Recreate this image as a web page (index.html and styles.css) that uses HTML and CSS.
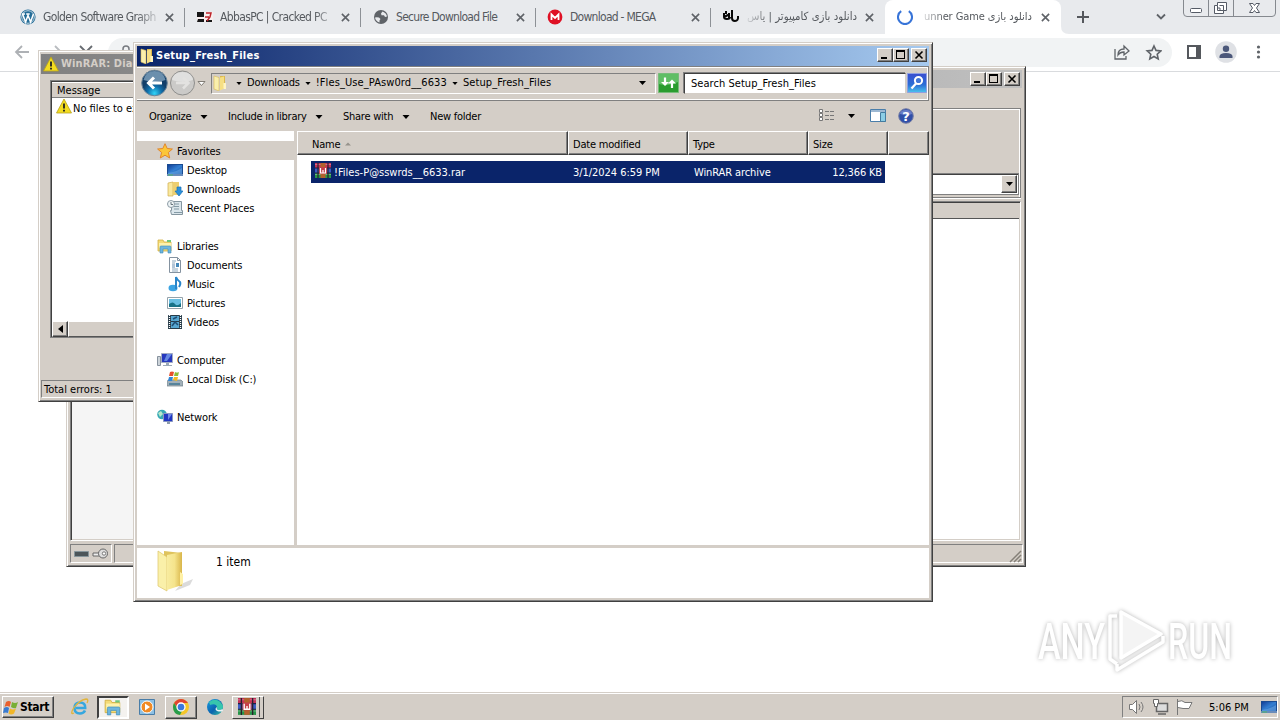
FILE: index.html
```html
<!DOCTYPE html>
<html lang="en">
<head>
<meta charset="utf-8">
<title>Desktop</title>
<link rel="stylesheet" href="styles.css">
</head>
<body>
<svg class="defs" width="0" height="0">
  <defs>
    <linearGradient id="gold"><stop offset="0" stop-color="#f8eca0"/><stop offset=".5" stop-color="#f5e48c"/><stop offset="1" stop-color="#d9b64a"/></linearGradient>
    <linearGradient id="blue" x2="1" y2="1"><stop offset="0" stop-color="#123f98"/><stop offset=".5" stop-color="#337fd2"/><stop offset="1" stop-color="#164d9e"/></linearGradient>
    <radialGradient id="orb" cy=".9"><stop offset="0" stop-color="#32d4f7"/><stop offset=".55" stop-color="#106fab"/><stop offset="1" stop-color="#123e69"/></radialGradient>
    <linearGradient id="edge" x2="1" y2="1"><stop offset="0" stop-color="#1b9de2"/><stop offset=".55" stop-color="#0b63af"/><stop offset="1" stop-color="#38c8a0"/></linearGradient>
    <linearGradient id="lens" y2="1" x2="0"><stop offset="0" stop-color="#3b4fd0"/><stop offset=".6" stop-color="#2a6fd6"/><stop offset="1" stop-color="#4cc4ee"/></linearGradient>
  </defs>
  <symbol id="x" viewBox="0 0 10 10"><path d="M1 1l8 8M9 1L1 9" stroke="#5f6368" stroke-width="1.8"/></symbol>
  <symbol id="folder" viewBox="0 0 16 16"><path d="M8 1h5v13H8z" fill="#dcb84e"/><path d="M2 1l5 1.500v13.500l-5-2z" fill="#f9efad" stroke="#d8b954" stroke-width=".6"/><path d="M8 2.500l4-1v12l-4 2z" fill="#f6df83"/><path d="M11.500 8H14v6h-2.500z" fill="#fff4c2"/></symbol>
  <symbol id="warn" viewBox="0 0 16 16"><path d="M8 1L15.5 15H.5z" fill="#f3dc20" stroke="#b6a21c" stroke-width=".8" stroke-linejoin="round"/><path d="M8 5.5v5M8 11.7v1.8" stroke="#222" stroke-width="1.8"/></symbol>
  <symbol id="screen" viewBox="0 0 16 14"><path d="M0 1h16v12H0z" fill="#1a4b91"/><path d="M1 2h14v9H1z" fill="url(#blue)"/><path d="M1 10Q9 9 15 5v6H1z" fill="#69a6e5" opacity=".6"/><path d="M0 12h16" stroke="#b9cde4"/><path d="M1 12h5" stroke="#4db66a"/></symbol>
  <symbol id="library" viewBox="0 0 16 16"><path d="M1 3V2h5l1 2h7v9H1z" fill="#f4db77" stroke="#d2b044" stroke-width=".8"/><path d="M2 5h12v5H2z" fill="#fdf2ac"/><path d="M10 2h4v2h-4z" fill="#6fc77a"/><path d="M3 15V9q0-1 1-1h9q1 0 1 1v6h-3v-4H6v4z" fill="#6db5dd" stroke="#3d8cba" stroke-width=".6"/></symbol>
  <symbol id="rar" viewBox="0 0 16 16"><path d="M0 0h16v5H0z" fill="#c4325a"/><path d="M0 5h16v5H0z" fill="#3c5cc4"/><path d="M0 10h16v5H0z" fill="#269548"/><path d="M0 1.5h16M0 11.5h16" stroke="#fff" opacity=".3"/><path d="M3 0v15M13 0v15" stroke="#28202c" stroke-width="1.2"/><path d="M5.5 0h5v15h-5z" fill="#b2622c"/><path d="M4 4h8v7H4z" fill="#c5404a"/><path d="M5.5 5v5h5V5M8 7v3" stroke="#fff" fill="none" stroke-width="1.2"/><path d="M0 5h4M12 5h4M0 10h4M12 10h4" stroke="#202040"/></symbol>
  <symbol id="tri" viewBox="0 0 7 4"><path d="M0 0h7L3.5 4z"/></symbol>
  <symbol id="min" viewBox="0 0 12 10"><path d="M2 8h6" stroke="#000" stroke-width="2"/></symbol>
  <symbol id="max" viewBox="0 0 12 10"><path d="M1.500 1.500h8v7h-8z" fill="none" stroke="#000" shape-rendering="crispEdges"/><path d="M1 1h9" stroke="#000" stroke-width="2"/></symbol>
  <symbol id="close" viewBox="0 0 12 10"><path d="M2.500 1.500l7 7M9.500 1.500l-7 7" stroke="#000" stroke-width="1.600"/></symbol>
</svg>

<div class="desktop">
  <section class="browser">
    <div class="tabs">
      <div class="tab t1">
        <svg class="fav" viewBox="0 0 16 16"><circle cx="8" cy="8" r="7.6" fill="#246d98"/><circle cx="8" cy="8" r="6.3" fill="none" stroke="#e7eef3" stroke-width=".8"/><path d="M2.5 5l3.1 8L8 6.3l2.6 6.7 2.8-8M2 5h3M6.2 5h3.5" fill="none" stroke="#fff" stroke-width="1.5"/></svg>
        <span class="label fade">Golden Software Graph</span><svg class="x"><use href="#x"/></svg>
      </div>
      <div class="tab t2">
        <svg class="fav" viewBox="0 0 16 16"><path d="M0 3h16v10H0z" fill="#f8eeee"/><path d="M0 3h7v5H0zM1 10h6v3H0zM9 11h6v2H9z" fill="#171717"/><path d="M9 4h5l-1 4-3 4M8 8h4" stroke="#bd262d" stroke-width="1.500" fill="none"/></svg>
        <span class="label fade">AbbasPC | Cracked PC</span><svg class="x"><use href="#x"/></svg>
      </div>
      <div class="tab t3">
        <svg class="fav" viewBox="0 0 16 16"><circle cx="8" cy="8" r="7" fill="#5f6368"/><path d="M2 8.500q1.500-.5 4 0l1.500 1.500-1 1.500v2Q2.500 12 2 8.500M9.500 2.500L8 4.500l.5 1.800H11l1 1.700 2-.5Q13.500 4 9.500 2.500" fill="#e8eaed"/></svg>
        <span class="label">Secure Download File</span><svg class="x"><use href="#x"/></svg>
      </div>
      <div class="tab t4">
        <svg class="fav" viewBox="0 0 16 16"><circle cx="8" cy="8" r="7.4" fill="#df1024"/><path d="M4.500 11V5.500L8 9l3.500-3.500V11" stroke="#fff" stroke-width="1.800" fill="none"/></svg>
        <span class="label">Download - MEGA</span><svg class="x"><use href="#x"/></svg>
      </div>
      <div class="tab t5">
        <svg class="fav" viewBox="0 0 16 16"><path d="M1 4v4q0 2 3 2t3-2M9 1v8q0 3 3 3 3.500 0 3-5M3 2v3M6 4v6M1 8l6-3" fill="none" stroke="#080808" stroke-width="2"/></svg>
        <span class="label fa fadeleft" dir="rtl">دانلود بازی کامپیوتر | یاس</span><svg class="x"><use href="#x"/></svg>
      </div>
      <div class="tab t6 active">
        <svg class="fav" viewBox="0 0 16 16"><path d="M4.200 2.200a7 7 0 1 0 7.600 0" fill="none" stroke="#3774d8" stroke-width="2.100"/></svg>
        <span class="label fa fadeleft" dir="rtl">دانلود بازی unner Game</span><svg class="x"><use href="#x"/></svg>
      </div>
      <svg class="strip-end" width="219" height="34" viewBox="1061 0 219 34"><path d="M1061 26q0 8 8 8h-8z" fill="#fff"/><path d="M1077 17h12M1083 11v12" stroke="#55585d" stroke-width="2"/><path d="M1157 14.500l4 4 4-4" fill="none" stroke="#5f6368" stroke-width="1.800"/><path d="M1183.500 0v13q0 3.500 3.500 3.500h85q3.500 0 3.500-3.500V0M1208.500 0v16M1233.500 0v16" fill="none" stroke="#85898f"/><rect x="1190.500" y="8.500" width="11" height="4" rx="1" fill="#fff" stroke="#555b66"/><path d="M1217.500 2.500h9v8h-3v3h-9v-8h3z" fill="#fff" stroke="#555b66"/><path d="M1217.500 5.500v5h6M1219.500 5.500h4v5M1217.500 8h2.500v2.500" fill="none" stroke="#555b66"/><path d="M1249.500 3.500h3.500l1.500 2 1.500-2h3.500l-3 4.500 3 4.500h-3.500l-1.500-2-1.500 2h-3.500l3-4.500z" fill="#fff" stroke="#555b66"/></svg>
    </div>
    <div class="toolbar">
      <svg class="nav-icons" width="108" height="37" viewBox="0 34 108 37"><path d="M29 52H16M22 46l-6 6 6 6" fill="none" stroke="#aeb1b5" stroke-width="1.800"/><path d="M48 52h13M55 46l6 6-6 6" fill="none" stroke="#b9bcc0" stroke-width="1.800"/><path d="M80 46l12 12M92 46L80 58" stroke="#686c71" stroke-width="1.800"/></svg>
      <div class="omnibox"><svg width="14" height="16" viewBox="0 0 14 16"><path d="M4 8V4q0-3 3-3t3 3v4M2 8h10v7H2z" fill="none" stroke="#777b80" stroke-width="1.500"/></svg>
        <svg class="omni-end" width="48" height="20" viewBox="0 0 48 20"><path d="M1 6v10h11v-3M4 12q0-6 6-6V3l5 5-5 4v-3q-4 0-6 3z" fill="none" stroke="#5f6368" stroke-width="1.300"/><path d="M40 3l2 4.400 4.800.5-3.600 3.300 1 4.700-4.200-2.400-4.200 2.400 1-4.700-3.600-3.300 4.800-.5z" fill="none" stroke="#5f6368" stroke-width="1.600"/></svg>
      </div>
      <svg class="tool-end" width="108" height="37" viewBox="1172 34 108 37"><path d="M1188 46h12v12h-12z" fill="none" stroke="#55585d" stroke-width="2"/><path d="M1196 46h4.500v12h-4.500z" fill="#55585d"/><circle cx="1226" cy="52" r="10.800" fill="#dfe1e5"/><circle cx="1226" cy="48.800" r="3.200" fill="#4c587a"/><path d="M1219.500 58v-1.500q0-3.500 6.500-3.500t6.500 3.500V58z" fill="#4c587a"/><g fill="#5f6368"><circle cx="1258.500" cy="47" r="1.600"/><circle cx="1258.500" cy="52" r="1.600"/><circle cx="1258.500" cy="57" r="1.600"/></g></svg>
    </div>
    <svg class="watermark" width="210" height="76" viewBox="0 0 210 76">
      <g class="mark" fill="#fff"><text x="5" y="53" textLength="67" lengthAdjust="spacingAndGlyphs">ANY</text><text x="135" y="53" textLength="64" lengthAdjust="spacingAndGlyphs">RUN</text><g stroke="#fff" stroke-width="3.500" stroke-linejoin="round" fill="none"><path d="M88 6v46l40-24z" fill="#f4f4f4"/><path d="M84 10h-7v43l7 5"/><path d="M84 58v6l46-28v-6"/></g></g>
    </svg>
  </section>

  <section class="win archive">
    <header><span class="buttons"><b><svg><use href="#min"/></svg></b><b><svg><use href="#max"/></svg></b><b class="gap"><svg><use href="#close"/></svg></b></span></header>
    <div class="group"><div class="combo"><b><svg class="tri"><use href="#tri"/></svg></b></div></div>
    <div class="filelist"><div class="side"></div><div class="rows"><div class="colhead"></div></div></div>
    <footer><div class="keys"><svg width="36" height="14" viewBox="0 0 36 14"><path d="M1.500 4.500h14v5h-14z" fill="#4c5559" stroke="#86959b"/><path d="M20 6h7v3h-7z" fill="#eee" stroke="#666"/><circle cx="30" cy="6.500" r="4.500" fill="#ddd" stroke="#666"/><circle cx="31" cy="6.500" r="1.700" fill="#fff" stroke="#777"/></svg></div><div class="status"></div><svg class="grip" width="14" height="14"><path d="M2 13L13 2M6 13l7-7M10 13l3-3" stroke="#858078" stroke-width="1.500"/></svg></footer>
  </section>

  <section class="win diag">
    <header><svg class="i16"><use href="#warn"/></svg><span class="wt">WinRAR: Diag</span></header>
    <div class="messages">
      <div class="mh"><span>Message</span></div>
      <div class="mrow"><svg class="i16"><use href="#warn"/></svg><span>No files to extract</span></div>
      <div class="scroll"><b><svg width="5" height="8"><path d="M5 0v8L0 4z"/></svg></b><i></i></div>
    </div>
    <div class="errors"><span>Total errors: 1</span></div>
  </section>

  <section class="win explorer">
    <header><svg class="i16"><use href="#folder"/></svg><span class="wt">Setup_Fresh_Files</span><span class="buttons"><b><svg><use href="#min"/></svg></b><b><svg><use href="#max"/></svg></b><b class="gap"><svg><use href="#close"/></svg></b></span></header>
    <div class="navbar">
      <svg class="orbs" width="66" height="28" viewBox="0 0 66 28"><circle cx="13.500" cy="14" r="12.800" fill="url(#orb)" stroke="#6d8598"/><path d="M2.500 11q2-9 11-9t11 9q-10 4-22 0" fill="#b5d1e5" opacity=".55"/><path d="M21 14H8M13 8.500L7.500 14l5.500 5.500" fill="none" stroke="#fff" stroke-width="3"/><circle cx="41.500" cy="14" r="12" fill="#cbcac8" stroke="#8e8e8c"/><path d="M31 11q1-8 10.500-8T52 11q-10 4-21 0" fill="#eee" opacity=".6"/><path d="M35 14h12M42 8.500l5.500 5.500-5.500 5.500" fill="none" stroke="#e3e2e0" stroke-width="2.500"/><path d="M57 12.500h7l-3.500 4z" fill="#fff" stroke="#817d76"/></svg>
      <div class="address"><svg class="i16 af"><use href="#folder"/></svg><svg class="tri a1"><use href="#tri"/></svg><span class="c1">Downloads</span><svg class="tri"><use href="#tri"/></svg><span class="c2">!Fles_Use_PAsw0rd__6633</span><svg class="tri"><use href="#tri"/></svg><span class="c3">Setup_Fresh_Files</span><svg class="tri last"><use href="#tri"/></svg></div>
      <svg class="go" width="21" height="20" viewBox="0 0 21 20"><path d="M.5.5h20v19H.5z" fill="#2a9c2f" stroke="#76bc79"/><path d="M1 1h19v8Q10 14 1 11z" fill="#73ca78" opacity=".75"/><path d="M7 4.500v5M14 15v-5" stroke="#fff" stroke-width="2.200"/><path d="M3 9h8l-4 4zM10 10.500h8l-4-4z" fill="#fff"/></svg>
      <div class="search"><span>Search Setup_Fresh_Files</span></div>
      <svg class="find" width="20" height="20" viewBox="0 0 20 20"><path d="M.5.500h19v19H.5z" fill="url(#lens)" stroke="#8f9fe0"/><circle cx="11.500" cy="7.500" r="3.600" fill="#4276d6" stroke="#fff" stroke-width="2"/><path d="M9 10.500l-4.500 5" stroke="#fff" stroke-width="2.300"/></svg>
    </div>
    <div class="commands"><span class="k1">Organize</span><svg class="tri"><use href="#tri"/></svg><span class="k2">Include in library</span><svg class="tri"><use href="#tri"/></svg><span class="k3">Share with</span><svg class="tri"><use href="#tri"/></svg><span class="k4">New folder</span>
      <svg class="views" width="96" height="18" viewBox="0 0 96 18"><path d="M.5 2.500h3v3h-3zM.5 6.500h3v3h-3zM.5 10.500h3v3h-3z" fill="#fff" stroke="#777"/><path d="M6 4.500h9M6 8.500h9M6 12.500h9" stroke="#777" stroke-dasharray="4 1"/><path d="M29 7h7l-3.500 4z"/><path d="M51.500 2.500h15v12h-15z" fill="#fff" stroke="#4a7eaa"/><path d="M52 3h14v2H52z" fill="#9db8d2"/><path d="M61.500 5.500h5v9h-5z" fill="#8bcde5" stroke="#437b9f"/><circle cx="87" cy="9" r="7.300" fill="#304fa8" stroke="#777fa6"/><path d="M81 7q0-4 6-4t6 4q-5 2-12 0" fill="#8292d4" opacity=".7"/><text x="87" y="13.500" class="help">?</text></svg>
    </div>
    <div class="body">
      <nav>
        <div class="ni root sel"><svg class="i16" viewBox="0 0 16 16"><path d="M8 .7l2.200 4.800 5.200.5-4 3.500 1.300 5.500L8 12.200 3.300 15l1.300-5.500-4-3.500 5.200-.5z" fill="#fbc638" stroke="#e2862b"/></svg><span>Favorites</span></div>
        <div class="ni"><svg class="i16"><use href="#screen"/></svg><span>Desktop</span></div>
        <div class="ni"><svg class="i16" viewBox="0 0 16 16"><path d="M1 2l5-1v14H1z" fill="#f9e89d" stroke="#d0ad4d" stroke-width=".7"/><path d="M6 1h6v13H6z" fill="#edcf70"/><path d="M10 6h4v4h2l-4 5L8 10h2z" fill="#2d91db" stroke="#1970b6" stroke-width=".7"/></svg><span>Downloads</span></div>
        <div class="ni"><svg class="i16" viewBox="0 0 16 16"><path d="M4.500 1.500h10v9h1v4h-11l-1-4h1z" fill="#dbe6ec" stroke="#84959f"/><path d="M8 4h4M7 6.500h5M7 9h5M7 12.500h8" stroke="#849aa5"/><circle cx="4" cy="4" r="3.500" fill="#eef4f6" stroke="#8d9ba5"/><path d="M4 2v2.500h2" fill="none" stroke="#66747c"/></svg><span>Recent Places</span></div>
        <div class="ni root space"><svg class="i16"><use href="#library"/></svg><span>Libraries</span></div>
        <div class="ni"><svg class="i16" viewBox="0 0 16 16"><path d="M2.500.5h8l3 3v12h-11z" fill="#fff" stroke="#8492a0"/><path d="M10.500.5v3h3" fill="none" stroke="#8492a0"/><path d="M5 4h4M5 6h3M5 12h6M5 14h6" stroke="#8da7bc"/><path d="M9 6h3v4H9z" fill="#4588ba"/><path d="M5 8h3M5 10h3" stroke="#668bb0"/></svg><span>Documents</span></div>
        <div class="ni"><svg class="i16" viewBox="0 0 16 16"><ellipse cx="6" cy="12" rx="4.500" ry="3.300" fill="#3ba4e3"/><path d="M9 13V1q1 3 4 5 1 2-1 5" fill="none" stroke="#2885ca" stroke-width="2"/></svg><span>Music</span></div>
        <div class="ni"><svg class="i16" viewBox="0 0 16 16"><path d="M.5 2.500h15v11H.5z" fill="#fff" stroke="#95a2aa"/><path d="M2 4h12v8H2z" fill="#69bee1"/><path d="M2 9q4-3 6 0t6-1v4H2z" fill="#187287"/></svg><span>Pictures</span></div>
        <div class="ni"><svg class="i16" viewBox="0 0 16 16"><path d="M1 1h14v14H1z" fill="#283c49"/><path d="M4 2h8v5H4zM4 8h8v6H4z" fill="#57a7d1"/><path d="M5 12l3-4 3 3M6 5l4-2" stroke="#204f75" stroke-width="1.500" fill="none"/><path d="M2.500 1v14M13.500 1v14" stroke="#fff" stroke-width="1.300" stroke-dasharray="1 1"/></svg><span>Videos</span></div>
        <div class="ni root space"><svg class="i16" viewBox="0 0 16 16"><path d="M.5 4.500h3v9h-3z" fill="#ccd3d9" stroke="#87929e"/><path d="M4.500 1.500h11v9h-11z" fill="#2537bd" stroke="#a2abc2"/><path d="M10 2h5l-5 7H7z" fill="#6588e2"/><path d="M9 11h3v2h3v1H6v-1h3z" fill="#9ba9b7"/></svg><span>Computer</span></div>
        <div class="ni"><svg class="i16" viewBox="0 0 16 16"><path d="M1 9h13l2 2v4H0v-4z" fill="#a2b0b9" stroke="#6f7f86" stroke-width=".7"/><path d="M2 12h11v2H2z" fill="#57849b"/><path d="M3 1q2-1 4 0L6 5H2z" fill="#e8502c"/><path d="M8 1q2 1 4 0l-1 4H7z" fill="#8dbd36"/><path d="M2 6h4l-1 4H1z" fill="#3286d7"/><path d="M7 6h4l-1 4-4-1z" fill="#f4bb25"/></svg><span>Local Disk (C:)</span></div>
        <div class="ni root space"><svg class="i16" viewBox="0 0 16 16"><circle cx="5" cy="5.500" r="4.800" fill="#36a9b5"/><path d="M1 4l3-2 2 3-3 3z" fill="#b4e7cb"/><path d="M6.500 4.500h9v8h-9z" fill="#2036c3" stroke="#8996c0"/><path d="M11 5h4l-4 6z" fill="#708be6"/><path d="M10 13h3v2h-3z" fill="#8e9daa"/></svg><span>Network</span></div>
      </nav>
      <main>
        <div class="columns"><div class="col name"><span>Name</span><svg width="7" height="4"><path d="M0 3.500h6L3 .5z" fill="#96928b"/></svg></div><div class="col date"><span>Date modified</span></div><div class="col type"><span>Type</span></div><div class="col size"><span>Size</span></div><div class="col rest"></div></div>
        <div class="file"><svg class="i16"><use href="#rar"/></svg><span class="f1">!Files-P@sswrds__6633.rar</span><span class="f2">3/1/2024 6:59 PM</span><span class="f3">WinRAR archive</span><span class="f4">12,366 KB</span></div>
      </main>
    </div>
    <div class="details"><svg width="42" height="46" viewBox="0 0 42 46"><path d="M27 36l12-5-3 6-15 6z" fill="#999" opacity=".35"/><path d="M10 3l18 2v33H10z" fill="#dfc35d"/><path d="M4 3l9 6v34L4 38z" fill="#faf0a9" stroke="#ddc467" stroke-width=".7"/><path d="M13 7l15-3v33l-15 5z" fill="url(#gold)"/><path d="M26 24l3 2v10l-3 1z" fill="#fff1a7"/></svg><span>1 item</span></div>
  </section>

  <footer class="taskbar">
    <div class="start"><svg width="17" height="17" viewBox="0 0 17 17"><path d="M3 3q3-2 5 0L6.500 8q-2-2-5 0z" fill="#e9602e"/><path d="M9 3q3 2 6 0l-2 6q-2 1-5-1z" fill="#78af36"/><path d="M1 9q3-2 5 0L5 14q-2-1-5 0z" fill="#397bd1"/><path d="M7 9.500q3 2 6 0l-2 5q-3 2-5.500 0z" fill="#f1b629"/></svg><span>Start</span></div>
    <div class="task p1"><svg class="i18" viewBox="0 0 18 18"><path d="M14 12.500q-1.500 3-5 3-5.500 0-5.500-5.500T9 4.500q5.500 0 5.200 5.500H5" fill="none" stroke="#35a7df" stroke-width="2.600"/><path d="M3 15q-4 2-1-4Q8 2 15 1q3 0 1 4" fill="none" stroke="#e1b53d" stroke-width="1.300"/></svg></div>
    <div class="task p2 pressed"><svg class="i18"><use href="#library"/></svg></div>
    <div class="task p3"><svg class="i18" viewBox="0 0 18 18"><path d="M1.500 1.500h15v15h-15z" fill="#8cc0e4" stroke="#497da8"/><circle cx="9" cy="9" r="6" fill="#f08a25" stroke="#fff"/><path d="M7 5.500l5 3.500-5 3.500z" fill="#fff"/></svg></div>
    <div class="task p4 raised"><svg class="i18" viewBox="0 0 18 18"><circle cx="9" cy="9" r="8" fill="#f4c629"/><path d="M2 5Q5 1 9 1t7 4H9q-3 0-4 4z" fill="#e04432"/><path d="M2 5l4 6q1 2 4 2l-2 4Q1 16 1 9q0-2 1-4" fill="#279c4a"/><circle cx="9" cy="9" r="4" fill="#3978df" stroke="#fff" stroke-width="1.300"/></svg></div>
    <div class="task p5"><svg class="i18" viewBox="0 0 18 18"><circle cx="9" cy="9" r="8" fill="url(#edge)"/><path d="M3 4q9-6 14 4 0 4-4 4-3 0-2-3-1-4-7-2z" fill="#37c6ad"/><path d="M11 9q-1 3 2 3 2 0 3.500-1l.5 2q-3 1-6 0-3-2 0-4" fill="#e9f4f5"/></svg></div>
    <div class="task p6 raised"><svg class="i18"><use href="#rar"/></svg></div>
    <div class="tray"><svg width="70" height="18" viewBox="0 0 70 18"><path d="M1.500 6.500h3l4-4v13l-4-4h-3z" fill="#fff" stroke="#777"/><path d="M11 6q2 3 0 6M13 4q4 5 0 10" fill="none" stroke="#777"/><path d="M28.500 5.500h11v8h-11zM30 16h8" fill="#ddd" stroke="#666" stroke-width="1.500"/><path d="M25.500 1.500h5v4h-1v3h-3v-3h-1z" fill="#fff" stroke="#666"/><path d="M49.500 1v16M50 3.500q4-2 7 1h7l-3 6h-6l-5-1" fill="#fff" stroke="#777"/></svg><span>5:06 PM</span><svg class="i16"><use href="#screen"/></svg></div>
  </footer>
</div>
</body>
</html>
```

FILE: styles.css
```css
*{box-sizing:border-box}
body{margin:0;background:#fff;color:#000;font:11px/14px "DejaVu Sans Condensed","DejaVu Sans",sans-serif;font-stretch:condensed;overflow:hidden}
svg{display:block;flex:none}
span{white-space:nowrap;flex:none}
.defs{position:absolute}
.desktop{width:1280px;height:720px;position:relative;overflow:hidden;background:#fff}
.i16{width:16px;height:16px}
.i18{width:18px;height:18px}
.tri{width:7px;height:4px}

/* browser */
.browser{height:693px}
.tabs{height:34px;background:#e8eaed;display:flex}
.tab{height:34px;display:flex;align-items:center;padding-left:12px;position:relative;color:#55595e;font:12px/16px "DejaVu Sans Condensed","DejaVu Sans",sans-serif;font-stretch:condensed}
.tab::after{content:"";position:absolute;right:0;top:8px;width:1px;height:19px;background:#8d9196}
.t1{width:185px;padding-left:20px}
.t2{width:176px}
.t3{width:175px}
.t4{width:175px;padding-left:11px}
.t5{width:174px}
.t6{width:176px}
.tab.t5::after,.tab.t6::after{display:none}
.active{background:#fff;border-radius:8px 8px 0 0}
.fav{width:16px;height:16px}
.label{margin-left:7px;width:114px;letter-spacing:-.72px}
.t1 .label,.t2 .label{letter-spacing:-.62px}
.t5 .label,.t6 .label{width:111px}
.fade{-webkit-mask-image:linear-gradient(90deg,#000 82%,rgba(0,0,0,.2))}
.fadeleft{-webkit-mask-image:linear-gradient(270deg,#000 78%,rgba(0,0,0,.1))}
.tab .fa{letter-spacing:0;font-size:11.3px}
.t6 .fa{letter-spacing:-.1px;font-size:11px;width:112px}
.x{width:9px;height:9px;margin-left:auto;margin-right:11px}
.toolbar{height:38px;background:#fff;border-bottom:1px solid #d9dbde;display:flex;align-items:flex-start}
.omnibox{margin-top:4px;width:1064px;height:29px;border-radius:15px;background:#f1f3f4;display:flex;align-items:center;padding:0 10px 0 11px}
.omni-end{margin-left:auto}
.watermark{margin:534px 0 0 1033px}
.mark{filter:drop-shadow(0 0 2px #b4b4b4)}
.watermark text{font:500 50px Roboto,sans-serif}

/* classic windows */
.win{position:absolute;background:#d4cec7;border:1px solid #d4cec7;border-right-color:#404040;border-bottom-color:#404040;box-shadow:inset 1px 1px #fff,inset -1px -1px #808080;overflow:hidden}
.win header{height:20px;display:flex;align-items:center;color:#fff;padding-left:2px;flex:none}
.wt{font-weight:bold;margin-left:1px}
.diag .wt{margin-left:2px;letter-spacing:.15px}
.explorer .wt{letter-spacing:.25px}
.buttons{margin-left:auto;display:flex;margin-right:2px}
.buttons b,.combo b,.scroll b{width:16px;height:14px;background:#d4cec7;border:1px solid #fff;border-right-color:#404040;border-bottom-color:#404040;box-shadow:inset -1px -1px #808080;display:flex;align-items:center;justify-content:center}
.explorer .buttons{margin-top:-2px}
.archive .buttons{margin-top:-1px}
.buttons svg{width:12px;height:10px}
.buttons .gap{margin-left:2px}

.archive{left:66px;top:66px;width:960px;height:501px;padding:3px;display:flex;flex-direction:column}
.archive header{height:18px;background:linear-gradient(90deg,#808080,#c0c0c0)}
.group{margin:20px 1px 0 0;height:90px;border:1px solid #808080;border-left:0;box-shadow:inset -1px 1px #fff,0 1px #fff;padding:64px 1px 0}
.combo{height:22px;background:#fff;border:1px solid #808080;box-shadow:inset 1px 1px #404040;padding:1px;display:flex;justify-content:flex-end}
.combo b{height:18px}
.filelist{height:341px;margin:3px 1px 0 0;border:1px solid #808080;border-right-color:#fff;border-bottom-color:#fff;display:flex;box-shadow:inset 1px 1px #404040}
.side{width:180px;margin:1px;background:#f5f5f5}
.rows{flex:1;background:#fff;margin:1px 1px 1px 0}
.colhead{height:16px;background:#d4cec7;border-bottom:1px solid #555}
.archive footer{margin-top:3px;height:19px;display:flex}
.keys{width:42px;border:1px solid #808080;border-right-color:#fff;border-bottom-color:#fff;padding:2px}
.status{flex:1;margin-left:2px;border:1px solid #808080;border-right-color:#fff;border-bottom-color:#fff}
.grip{margin:5px 0 0 -15px}

.diag{left:38px;top:50px;width:500px;height:352px;padding:3px 2px 2px}
.diag header{background:linear-gradient(90deg,#808080,#aaa);color:#d4cec7}
.messages{margin:6px 9px 0;height:258px;background:#fff;border:1px solid #808080;box-shadow:inset 1px 1px #404040;padding:2px 1px 0;display:flex;flex-direction:column}
.mh{height:15px;background:#d4cec7;border-bottom:1px solid #808080;padding:1px 0 0 5px}
.mrow{height:16px;display:flex;align-items:center;padding-left:4px}
.mrow span{padding:5px 0 0 1px}
.scroll{margin-top:auto;height:16px;display:flex}
.scroll b,.scroll i{height:16px}
.scroll i{width:250px;background:#d4cec7;border:1px solid #fff;border-bottom-color:#555}
.errors{margin-top:42px;height:18px;border:1px solid #808080;border-right-color:#fff;border-bottom-color:#fff;padding:2px}

.explorer{left:133px;top:42px;width:800px;height:560px;padding:3px;display:flex;flex-direction:column}
.explorer header{background:linear-gradient(90deg,#0a246a,#a6caf0)}
.navbar{height:35px;flex:none;border:1px solid #808080;border-left:0;box-shadow:inset -1px -1px #fff,inset 0 1px #fff;display:flex;align-items:center;padding:0 0 1px 4px}
.address{margin-left:4px;width:445px;height:21px;border:1px solid #808080;border-bottom-color:#fff;border-right-color:#fff;display:flex;align-items:center}
.address .tri,.commands .tri{width:6px;height:3px}
.address .tri.a1{margin-left:8px}
.address span{margin:0 5px}
.address .c1{letter-spacing:-.18px}
.address .c2{letter-spacing:.1px}
.address .c3{letter-spacing:.1px}
.address .last{margin-left:auto;margin-right:9px;width:7px;height:4px}
.go{margin-left:2px}
.search{margin-left:5px;width:222px;height:21px;background:#fff;border:1px solid #404040;border-right-color:#d4cec7;border-bottom-color:#d4cec7;box-shadow:-1px -1px #808080;padding:3px 6px;letter-spacing:.05px}
.find{margin-left:1px}
.commands{height:30px;display:flex;align-items:center;padding-left:12px;flex:none;letter-spacing:-.25px}
.commands span{padding-top:1px}
.k1{width:43px}
.k2{width:79px}
.k3{width:51px}
.commands .tri{width:8px;height:4px;margin:1px 20px 0 8px}
.views{margin-left:auto;margin-right:14px}
.help{font:bold 13px "DejaVu Sans",sans-serif;fill:#fff;text-anchor:middle;letter-spacing:0}
.body{height:414px;flex:none;display:flex;background:#d4cec7}
nav{width:157px;background:#fff;padding-top:10px;letter-spacing:-.12px}
.ni{height:19px;display:flex;align-items:center;padding-left:30px}
.ni span{margin-left:4px;padding-top:2px}
.ni.root{padding-left:20px}
.sel{background:#d4cec7}
.space{margin-top:19px}
main{flex:1;margin-left:3px;background:#fff}
.columns{height:24px;display:flex}
.col{background:#d4cec7;border-top:1px solid #fff;border-left:1px solid #fff;border-right:1px solid #404040;border-bottom:1px solid #404040;box-shadow:inset -1px -1px #808080;padding:6px 0 0 3px;display:flex;letter-spacing:-.2px}
.col svg{margin:4px 0 0 5px}
.col.name{width:271px;padding-left:14px}
.col.date{padding-left:4px}
.col.type{padding-left:4px}
.col.size{padding-left:4px}
.date,.type{width:120px}
.size{width:80px}
.rest{flex:1}
.file{margin:6px 0 0 14px;width:574px;height:22px;background:#0a246a;color:#fff;display:flex;align-items:center;padding:0 3px 0 4px}
.file .i16{margin-top:-2px}
.file span{padding-top:2px}
.f1{width:240px;margin-left:3px;margin-right:-1px}
.f2{width:120px;letter-spacing:-.05px}
.f3{width:120px;margin-left:1px;letter-spacing:-.1px}
.f4{margin-left:auto;letter-spacing:-.15px}
.details{height:50px;margin-top:3px;background:#fff;display:flex}
.details svg{margin:0 0 0 17px}
.details span{font-size:12px;margin:7px 0 0 20px}

/* taskbar */
.taskbar{height:27px;background:#d4cec7;border-top:1px solid #fff;box-shadow:0 -1px #d4cec7;display:flex;align-items:center;position:relative}
.start{margin-left:2px;width:52px;height:22px;border:1px solid #fff;border-right-color:#404040;border-bottom-color:#404040;box-shadow:inset -1px -1px #808080;display:flex;align-items:center;font-weight:bold;font-size:12px}
.start span{letter-spacing:-.35px}
.task{height:23px;width:32px;display:flex;align-items:center;justify-content:center}
.p1{margin-left:10px}
.p2{margin-left:1px}
.p3{margin-left:2px}
.p4{margin-left:2px}
.p5{margin-left:2px}
.p6{margin-left:1px}
.raised{border:1px solid #fff;border-right-color:#404040;border-bottom-color:#404040;box-shadow:inset -1px -1px #808080}
.pressed{background:#f4f2ef;border:2px solid #404040;border-right-color:#fff;border-bottom-color:#fff}
.p6.raised{box-shadow:inset -3px -1px #d4cec7,inset -4px 0 #555;padding-right:3px}
.tray{margin-left:auto;margin-right:2px;width:156px;height:22px;border:1px solid #808080;border-right-color:#fff;border-bottom-color:#fff;display:flex;align-items:center;padding-left:5px}
.tray span{margin:0 12px 0 11px;padding-top:1px}
```
